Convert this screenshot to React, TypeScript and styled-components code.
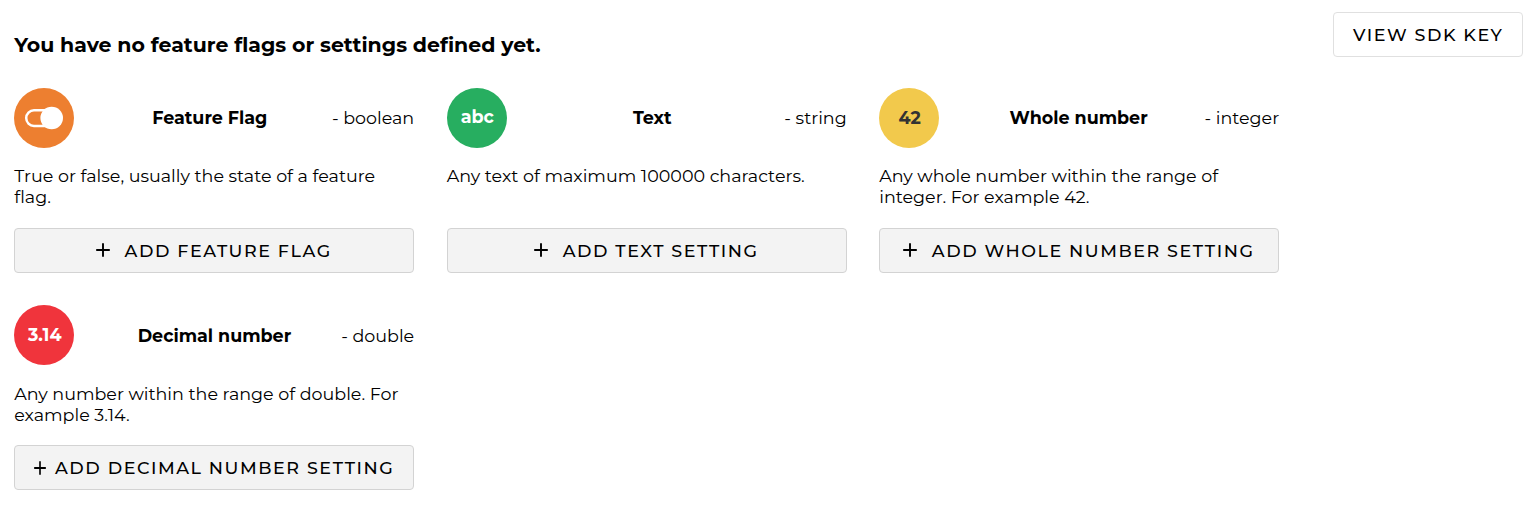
import React from 'react';
import styled, { createGlobalStyle } from 'styled-components';

const GlobalStyle = createGlobalStyle`
  *, *::before, *::after { box-sizing: border-box; }
  body {
    margin: 0;
    background: #fff;
    color: #000;
    font: 400 17.5px Montserrat, "Open Sans", sans-serif;
  }
`;

const Page = styled.main`
  padding: 12px 10px 0 14.2px;
`;

const Header = styled.header`
  display: flex;
  align-items: flex-start;
  justify-content: space-between;
  height: 75.7px;
`;

const Title = styled.h3`
  margin: 20px 0 0;
  font-size: 1.171em;
  font-weight: 700;
`;

const Button = styled.button`
  display: flex;
  align-items: center;
  justify-content: center;
  height: 45px;
  padding: 0 18.5px 0 19px;
  border: 1px solid #e0e0e0;
  border-radius: 4px;
  background: #fff;
  color: #000;
  font: inherit;
  font-weight: 500;
  letter-spacing: 0.0892857143em;
  text-transform: uppercase;
  white-space: nowrap;
`;

const AddButton = styled(Button)`
  width: 100%;
  padding: 0 18.9px 0 18.5px;
  border-color: #d3d3d3;
  background: #f3f3f3;
`;

const PlusIcon = styled.svg<{ $compact?: boolean }>`
  flex: none;
  width: ${(p) => (p.$compact ? 12 : 14)}px;
  height: 14px;
  margin-right: ${(p) => (p.$compact ? 9.3 : 14.3)}px;
`;

const Cards = styled.section`
  display: grid;
  grid-template-columns: repeat(3, 400px);
  gap: 32.55px 32.5px;
`;

const Card = styled.article`
  display: flex;
  flex-direction: column;
`;

const CardHead = styled.div`
  display: flex;
  align-items: center;
  justify-content: space-between;
`;

const Badge = styled.div<{ $bg: string; $fg: string }>`
  display: flex;
  align-items: center;
  justify-content: center;
  width: 60px;
  height: 60px;
  margin-right: 13.5px;
  border-radius: 50%;
  background: ${(p) => p.$bg};
  color: ${(p) => p.$fg};
  font-weight: 700;
`;

const BadgeLabel = styled.span<{ $lift?: number }>`
  padding: 0 0 ${(p) => p.$lift ?? 0}px 1.1px;
`;

const Name = styled.span`
  font-weight: 700;
`;

const Description = styled.p`
  min-height: 42.5px;
  margin: 17.5px 0 20px;
`;

const Toggle = () => (
  <svg width="60" height="60" viewBox="0 0 60 60" fill="none">
    <rect x="12.2" y="22.3" width="34" height="15.6" rx="7.8" stroke="#fff" strokeWidth="2.5" />
    <circle cx="37.7" cy="30" r="11.3" fill="#fff" />
  </svg>
);

interface Setting {
  name: string;
  type: string;
  text: string;
  action: string;
  bg: string;
  fg: string;
  badge: React.ReactNode;
  compact?: boolean;
}

const settings: Setting[] = [
  { name: 'Feature Flag', type: 'boolean', text: 'True or false, usually the state of a feature flag.', action: 'Add feature flag', bg: '#ed7f30', fg: '#fff', badge: <Toggle /> },
  { name: 'Text', type: 'string', text: 'Any text of maximum 100000 characters.', action: 'Add text setting', bg: '#27ae60', fg: '#fff', badge: <BadgeLabel $lift={2}>abc</BadgeLabel> },
  { name: 'Whole number', type: 'integer', text: 'Any whole number within the range of integer. For example 42.', action: 'Add whole number setting', bg: '#f2c94c', fg: '#333', badge: <BadgeLabel>42</BadgeLabel> },
  { name: 'Decimal number', type: 'double', text: 'Any number within the range of double. For example 3.14.', action: 'Add decimal number setting', bg: '#f0343c', fg: '#fff', badge: <BadgeLabel $lift={1}>3.14</BadgeLabel>, compact: true },
];

export default function App() {
  return (
    <Page>
      <GlobalStyle />
      <Header>
        <Title>You have no feature flags or settings defined yet.</Title>
        <Button>View SDK Key</Button>
      </Header>
      <Cards>
        {settings.map((s) => (
          <Card key={s.name}>
            <CardHead>
              <Badge $bg={s.bg} $fg={s.fg}>{s.badge}</Badge>
              <Name>{s.name}</Name>
              <span>- {s.type}</span>
            </CardHead>
            <Description>{s.text}</Description>
            <AddButton>
              <PlusIcon $compact={s.compact} viewBox="0 0 14 14" preserveAspectRatio="none" stroke="#000" strokeWidth="1.9">
                <path d="M7 0.2V13.8M0.2 7H13.8" />
              </PlusIcon>
              {s.action}
            </AddButton>
          </Card>
        ))}
      </Cards>
    </Page>
  );
}
